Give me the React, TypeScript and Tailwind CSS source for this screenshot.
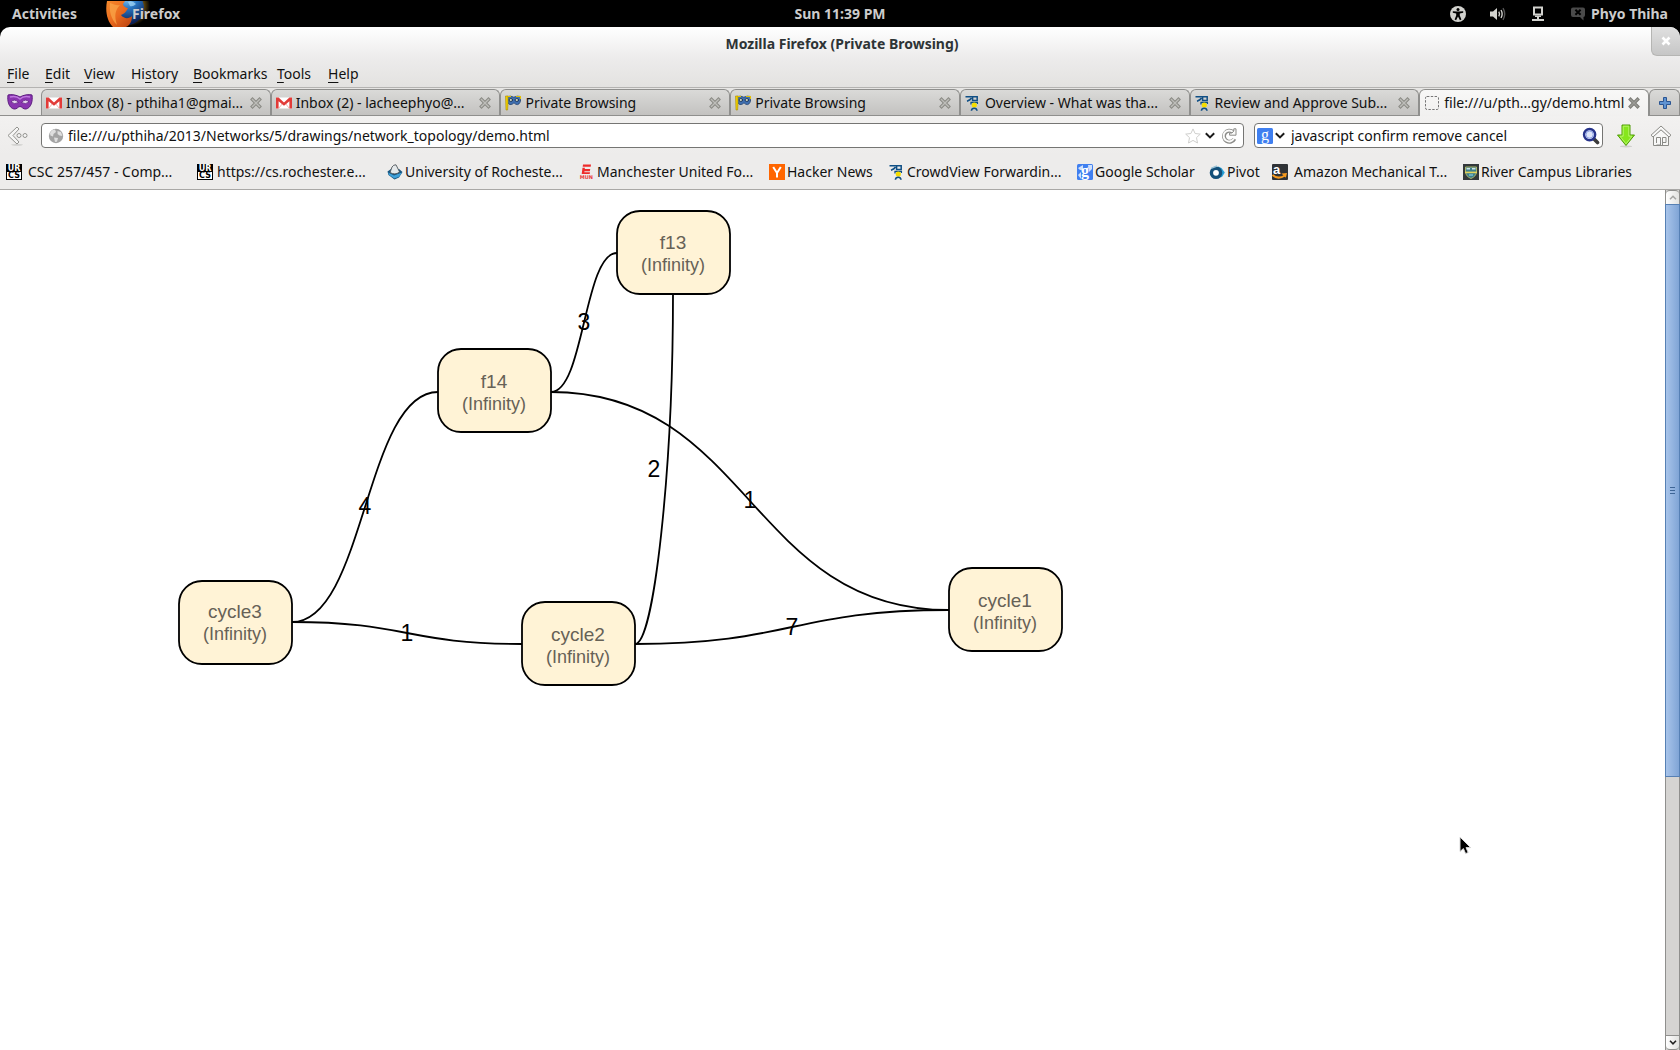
import React from "react";

const uiFont = "font-['Noto_Sans',sans-serif]";

/* ---------- icons ---------- */

function FirefoxIcon() {
  return (
    <svg viewBox="0 0 44 26" className="h-[26px] w-11" aria-hidden="true">
      <defs>
        <radialGradient id="globe" cx="0.5" cy="0.2" r="0.75">
          <stop offset="0" stopColor="#8fd0f5" />
          <stop offset="0.4" stopColor="#2a78c4" />
          <stop offset="1" stopColor="#0a1f55" />
        </radialGradient>
        <linearGradient id="fox" x1="0" y1="0" x2="1" y2="1">
          <stop offset="0" stopColor="#f58a2c" />
          <stop offset="0.5" stopColor="#ea6a1e" />
          <stop offset="1" stopColor="#b8400f" />
        </linearGradient>
        <radialGradient id="glow">
          <stop offset="0.6" stopColor="#7a5a10" />
          <stop offset="1" stopColor="#000" />
        </radialGradient>
      </defs>
      <circle cx="24" cy="5" r="20" fill="url(#glow)" />
      <circle cx="21" cy="7" r="17" fill="url(#globe)" />
      <path d="M1 0 C-1 10 1 20 7 26 L20 26 C24 24 26 20 26 15 C23 18 18 18 15 14 C18 13 20 11 22 7 C20 7 17 5 17 3 L19 0Z" fill="url(#fox)" />
      <path d="M4 2 C3 10 5 18 11 24 C8 15 9 9 14 4 C10 5 8 3 4 2Z" fill="#fba94c" opacity="0.7" />
      <path d="M22 1 Q26 -1 30 3 Q27 6 24 5Z" fill="#a9dcf8" opacity="0.7" />
    </svg>
  );
}

function AccessIcon() {
  return (
    <svg viewBox="0 0 16 16" className="size-4" aria-hidden="true">
      <circle cx="8" cy="8" r="8" fill="#d2d2ce" />
      <circle cx="8" cy="3.4" r="1.5" fill="#000" />
      <path d="M2.8 5.3 L6.8 5.4 H9.2 L13.2 5.3 V6.8 L9.8 7.4 V9.4 L11.4 13.6 L9.9 14.2 L8 10.4 L6.1 14.2 L4.6 13.6 L6.2 9.4 V7.4 L2.8 6.8Z" fill="#000" />
    </svg>
  );
}

function VolumeIcon() {
  return (
    <svg viewBox="0 0 16 14" className="h-3.5 w-4" fill="none" aria-hidden="true">
      <path d="M0 4.5 H3 L7 1 V13 L3 9.5 H0Z" fill="#d2d2ce" />
      <path d="M8.8 4.6 Q10.3 7 8.8 9.4" stroke="#d2d2ce" strokeWidth="1.4" />
      <path d="M11 3 Q13.3 7 11 11" stroke="#d2d2ce" strokeWidth="1.4" />
      <path d="M13 1.2 Q16.4 7 13 12.8" stroke="#555" strokeWidth="1.4" />
    </svg>
  );
}

function NetworkIcon() {
  return (
    <svg viewBox="0 0 12 16" className="h-4 w-3" aria-hidden="true">
      <path d="M1 0.5 H11 V9.5 H1Z M3 2.5 V7.5 H9 V2.5Z" fill="#d2d2ce" fillRule="evenodd" />
      <path d="M3 9.5 H9 V11 H7 V13 H12 V15 H0 V13 H5 V11 H3Z" fill="#d2d2ce" />
    </svg>
  );
}

function ChatIcon() {
  return (
    <svg viewBox="0 0 14 14" className="size-3.5" aria-hidden="true">
      <path d="M2 0.5 H12 Q14 0.5 14 2.5 V8 Q14 10 12.5 10 V13.5 L9 10 H2 Q0 10 0 8 V2.5 Q0 0.5 2 0.5Z" fill="#4a4a4a" />
      <path d="M4.4 2.8 L9.6 7.8 M9.6 2.8 L4.4 7.8" stroke="#000" strokeWidth="2" />
    </svg>
  );
}

function MaskIcon() {
  return (
    <svg viewBox="0 0 26 16" className="h-4 w-[26px]" aria-hidden="true">
      <path d="M1 1 C4 0 10 1 13 3 C16 1 22 0 25 1 C26 7 24 14 19 15 C16 15.5 15 12.5 13 12.5 C11 12.5 10 15.5 7 15 C2 14 0 7 1 1Z" fill="#8a35b0" stroke="#5e1f80" strokeWidth="1" />
      <path d="M3 3 C7 2 11 3 13 5 C15 3 19 2 23 3" fill="none" stroke="#c07ae0" strokeWidth="1.4" />
      <path d="M4 8 Q7.5 4 11.5 8.5 Q7.5 11 4 8Z M22 8 Q18.5 4 14.5 8.5 Q18.5 11 22 8Z" fill="#e6d5ee" stroke="#5e1f80" strokeWidth="0.8" />
    </svg>
  );
}

function GmailIcon() {
  return (
    <svg viewBox="0 0 16 16" className="size-4 shrink-0" aria-hidden="true">
      <path d="M0 2.5 H16 V13.5 H0Z" fill="#fff" />
      <path d="M3 13 L6.5 8.5 M13 13 L9.5 8.5" stroke="#f3b5b3" strokeWidth="1" />
      <path d="M0 2.5 H2.6 L8 7.4 L13.4 2.5 H16 V13.5 H13.4 V6.2 L8 10.8 L2.6 6.2 V13.5 H0Z" fill="#e23b38" />
    </svg>
  );
}

function PrivateIcon() {
  return (
    <svg viewBox="0 0 16 16" className="size-4 shrink-0" aria-hidden="true">
      <path d="M2 1.5 Q6 0.5 8.8 2.2 Q12 0.5 15.8 1.5 Q16 9 12.5 9.6 Q10.6 9.8 9 7.8 Q7.4 9.8 5 9.6 Q2 9 2 1.5Z" fill="#3f6fb0" stroke="#1d3f70" strokeWidth="0.8" />
      <ellipse cx="5.8" cy="5" rx="1.8" ry="1.4" fill="#dfe5c8" stroke="#16305a" />
      <ellipse cx="11.8" cy="5" rx="1.8" ry="1.4" fill="#dfe5c8" stroke="#16305a" />
      <path d="M0.5 1 H3 V9 L2.6 15 H1 Z" fill="#f0d000" stroke="#a88c00" strokeWidth="0.6" />
      <path d="M3 1.5 H6 M11 1.5 H15.5 V4" stroke="#e3c000" strokeWidth="1.2" fill="none" />
    </svg>
  );
}

function CrowdIcon() {
  return (
    <svg viewBox="0 0 16 16" className="size-4 shrink-0" fill="none" aria-hidden="true">
      <path d="M0.5 1.8 H12.2 V5.4 H7.6 V2" stroke="#0f4f85" strokeWidth="1.5" />
      <path d="M6.6 3 Q5.4 5 2 6.2" stroke="#0f4f85" strokeWidth="1.5" />
      <path d="M6 9.6 V7.4 H12.4 V9" stroke="#0f4f85" strokeWidth="1.3" />
      <circle cx="9.3" cy="10" r="2.6" fill="#f5dd00" />
      <path d="M6.4 15.8 Q6.6 13.2 9.2 13.2 Q11.8 13.2 12 15.8" stroke="#0f4f85" strokeWidth="1.6" />
    </svg>
  );
}

function BlankPageIcon() {
  return (
    <svg viewBox="0 0 16 16" className="size-4 shrink-0" aria-hidden="true">
      <rect x="1.5" y="1.5" width="13" height="13" rx="1.5" fill="none" stroke="#777" strokeDasharray="2.4 1.4" />
    </svg>
  );
}

function CloseGlyph({ dark = false }: { dark?: boolean }) {
  return (
    <svg viewBox="0 0 12 12" className="size-3" aria-hidden="true">
      <path d="M2.5 2.5 L9.5 9.5 M9.5 2.5 L2.5 9.5" stroke={dark ? "#7c7c76" : "#8a8a84"} strokeWidth="3.4" strokeLinecap="square" />
      <path d="M2.5 2.5 L9.5 9.5 M9.5 2.5 L2.5 9.5" stroke={dark ? "#9b9b96" : "#bdbdb9"} strokeWidth="1.4" strokeLinecap="square" />
    </svg>
  );
}

function BackIcon() {
  return (
    <svg viewBox="0 0 22 20" className="h-5 w-[22px]" aria-hidden="true">
      <ellipse cx="10" cy="18.8" rx="6" ry="0.9" fill="#d0d0ce" />
      <path d="M10 1 L12 3 L6 9.5 L12 16 L10 18 L1 9.5Z" fill="#f6f6f5" stroke="#93938f" strokeLinejoin="round" />
      <circle cx="12" cy="9.5" r="2" fill="#f6f6f5" stroke="#93938f" />
      <circle cx="18" cy="9.5" r="2" fill="#f6f6f5" stroke="#93938f" />
    </svg>
  );
}

function GlobeIcon() {
  return (
    <svg viewBox="0 0 16 16" className="size-4 shrink-0" aria-hidden="true">
      <circle cx="8" cy="8" r="7.2" fill="#a3a3a3" />
      <path d="M2 5 Q4 1.5 7 1.6 L8 4 L5.5 6 L5 8.6 L2.4 7.4Z M9.5 3 L13 4 L14.4 8 L11.5 7.6 L9.6 6Z M6 9.5 L10 10 L9 13.8 L7 14Z" fill="#dedede" />
    </svg>
  );
}

function StarIcon() {
  return (
    <svg viewBox="0 0 16 16" className="size-4" aria-hidden="true">
      <path d="M8 0.9 L10.1 5.5 L15.3 6.1 L11.5 9.6 L12.5 15 L8 12.4 L3.5 15 L4.5 9.6 L0.7 6.1 L5.9 5.5Z" fill="#fff" stroke="#cfcfcd" strokeLinejoin="round" />
    </svg>
  );
}

function ChevronIcon() {
  return (
    <svg viewBox="0 0 10 8" className="h-2 w-2.5" aria-hidden="true">
      <path d="M0.8 1.2 L5 5.4 L9.2 1.2" fill="none" stroke="#1a1a1a" strokeWidth="2" />
    </svg>
  );
}

function ReloadIcon() {
  return (
    <svg viewBox="0 0 16 16" className="size-4" fill="none" aria-hidden="true">
      <path d="M12 4 A5.5 5.5 0 1 0 13.4 10.8" stroke="#8b8b88" strokeWidth="4" />
      <path d="M12 4 A5.5 5.5 0 1 0 13 10.4" stroke="#fbfbfa" strokeWidth="2" />
      <path d="M15 0.8 V7.2 H8.6 V5 H11 L12.8 3 V0.8Z" fill="#fbfbfa" stroke="#8b8b88" />
    </svg>
  );
}

function GoogleIcon({ scholar = false }: { scholar?: boolean }) {
  return (
    <svg viewBox="0 0 16 16" className="size-4 shrink-0 overflow-visible" aria-hidden="true">
      <rect width="16" height="16" rx="1.5" fill="#3f7ff0" />
      {scholar && <path d="M1 4 L6 1 V6 Q3 7 1 4Z M11 1 L15 1 V5 L12 8Z M1 11 L4 8 V15Z" fill="#cfe0fb" />}
      <text x="8" y="12" textAnchor="middle" fontSize="16" fontFamily="Liberation Serif, serif" fontWeight={scholar ? 700 : 400} fill="#fff">g</text>
    </svg>
  );
}

function SearchIcon() {
  return (
    <svg viewBox="0 0 18 18" className="size-[18px]" aria-hidden="true">
      <path d="M11 11 L15.5 15.5" stroke="#3c3c3c" strokeWidth="3.6" strokeLinecap="round" />
      <circle cx="7.6" cy="7.6" r="5.6" fill="#dfe6fa" stroke="#27348b" strokeWidth="2.4" />
      <circle cx="7.6" cy="7.6" r="3.6" fill="none" stroke="#8fa4e8" strokeWidth="1" />
    </svg>
  );
}

function DownloadIcon() {
  return (
    <svg viewBox="0 0 20 24" className="h-6 w-5" aria-hidden="true">
      <ellipse cx="10" cy="22.4" rx="6" ry="1" fill="#cfcfcd" />
      <path d="M6 1 H14 V11 H18.5 L10 21.5 L1.5 11 H6Z" fill="#86e71c" stroke="#4f9a06" strokeLinejoin="round" />
      <path d="M7.2 2.2 H12.8 V12.2 H16 L10 19.8 L4 12.2 H7.2Z" fill="none" stroke="#b6f56c" />
    </svg>
  );
}

function HomeIcon() {
  return (
    <svg viewBox="0 0 22 22" className="size-[22px]" fill="#f8f8f7" stroke="#8c8c88" strokeLinejoin="round" aria-hidden="true">
      <path d="M3.5 11 L11 4.5 L18.5 11 V20.5 H3.5Z" />
      <path d="M11 1 L21 10.2 L19 12 L11 4.8 L3 12 L1 10.2Z" />
      <path d="M6.5 18 V12.5 H10.5 V20 M10.5 20 H6.5 M12.5 20 V12.5 H16 V17.5 H12.5" fill="none" />
    </svg>
  );
}

function UrcsIcon() {
  return (
    <svg viewBox="0 0 16 16" className="size-4 shrink-0 overflow-visible" aria-hidden="true">
      <rect width="16" height="16" fill="#000" />
      <rect x="1" y="8" width="14" height="7" fill="#fff" />
      <text x="8" y="7" textAnchor="middle" fontSize="8" fontWeight="700" fontFamily="DejaVu Sans, sans-serif" fill="#fff">UR</text>
      <text x="8" y="14.4" textAnchor="middle" fontSize="8" fontWeight="700" fontFamily="DejaVu Sans, sans-serif" fill="#000">CS</text>
    </svg>
  );
}

function RochesterIcon() {
  return (
    <svg viewBox="0 0 16 16" className="size-4 shrink-0" aria-hidden="true">
      <path d="M0.5 7.5 L4 5 H12 L15.5 8 L12 13.5 L7.5 15.4 L1.5 11Z" fill="#16547f" />
      <path d="M1.2 8.5 L7 11.5 L15 8.5 L12 12.8 L7.5 14.6 L2 11Z" fill="#3fa0d8" />
      <path d="M3 8.5 L5 3 Q6.5 0.6 9 0.8 L12.6 8 Q8 11.5 3 8.5Z" fill="#e4e8ea" stroke="#4f565b" strokeWidth="0.9" />
    </svg>
  );
}

function EspnIcon() {
  return (
    <svg viewBox="0 0 16 16" className="size-4 shrink-0 overflow-visible" aria-hidden="true">
      <path d="M4 0.5 H12 L11.7 2.8 H3.7Z M3.5 3.8 H6 L5.7 5 H11.2 L10.9 7.2 H5.5 L5.3 8.2 H11 L10.7 10 H2.7Z" fill="#ee2b2b" />
      <text x="7.4" y="15.4" textAnchor="middle" fontSize="5" fontWeight="700" fontFamily="DejaVu Sans, sans-serif" fill="#e84040">MUN</text>
    </svg>
  );
}

function HackerIcon() {
  return (
    <svg viewBox="0 0 16 16" className="size-4 shrink-0" aria-hidden="true">
      <rect width="16" height="16" fill="#ff6600" />
      <path d="M4.2 3 L8 9 L11.8 3 M8 8.5 V13.4" fill="none" stroke="#fff" strokeWidth="2" />
    </svg>
  );
}

function PivotIcon() {
  return (
    <svg viewBox="0 0 16 16" className="size-4 shrink-0" fill="none" aria-hidden="true">
      <path d="M9 2.5 L12.5 4 L15.8 8.5 L13 13 L8 14Z" fill="#27a0d8" />
      <circle cx="7" cy="8.8" r="4.6" fill="#fff" stroke="#13507a" strokeWidth="3.4" />
      <path d="M2 4.4 L8 2" stroke="#9bc4d8" strokeWidth="1.4" />
    </svg>
  );
}

function AmazonIcon() {
  return (
    <svg viewBox="0 0 16 16" className="size-4 shrink-0 overflow-visible" aria-hidden="true">
      <rect width="16" height="16" rx="1" fill="#2f3236" />
      <text x="4.6" y="9.5" textAnchor="middle" fontSize="13" fontWeight="700" fontFamily="Liberation Sans, sans-serif" fill="#fff">a</text>
      <path d="M0.5 11 Q6 16 13 11.5" fill="none" stroke="#f79a1e" strokeWidth="2" />
      <path d="M9.5 9.6 L15 9 L13.8 13.8Z" fill="#f79a1e" />
    </svg>
  );
}

function LibraryIcon() {
  return (
    <svg viewBox="0 0 16 16" className="size-4 shrink-0" aria-hidden="true">
      <rect width="16" height="16" fill="#33383a" />
      <path d="M2.5 3 H13.5 V8 Q13 12.5 8 14.5 Q3 12.5 2.5 8Z" fill="#3d7f8c" stroke="#a9b56a" />
      <path d="M3.5 4.8 H7 M9 4.8 H12.5" stroke="#cfe3ea" strokeWidth="1.4" />
      <path d="M2 8.4 H14" stroke="#e3d25a" strokeWidth="1.6" />
      <path d="M6 11 H10" stroke="#7fc2d6" strokeWidth="1.4" />
    </svg>
  );
}

/* ---------- data ---------- */

const menus = [
  { before: "", key: "F", after: "ile" },
  { before: "", key: "E", after: "dit" },
  { before: "", key: "V", after: "iew" },
  { before: "Hi", key: "s", after: "tory" },
  { before: "", key: "B", after: "ookmarks" },
  { before: "", key: "T", after: "ools" },
  { before: "", key: "H", after: "elp" },
];

const tabs = [
  { icon: <GmailIcon />, label: "Inbox (8) - pthiha1@gmai..." },
  { icon: <GmailIcon />, label: "Inbox (2) - lacheephyo@..." },
  { icon: <PrivateIcon />, label: "Private Browsing" },
  { icon: <PrivateIcon />, label: "Private Browsing" },
  { icon: <CrowdIcon />, label: "Overview - What was tha..." },
  { icon: <CrowdIcon />, label: "Review and Approve Sub..." },
  { icon: <BlankPageIcon />, label: "file:///u/pth...gy/demo.html", active: true },
];

const bookmarks = [
  { icon: <UrcsIcon />, label: "CSC 257/457 - Comp...", box: "w-[191px] gap-1.5" },
  { icon: <UrcsIcon />, label: "https://cs.rochester.e...", box: "w-[190px] gap-1" },
  { icon: <RochesterIcon />, label: "University of Rocheste...", box: "w-[192px] gap-0.5" },
  { icon: <EspnIcon />, label: "Manchester United Fo...", box: "w-[190px] gap-0.5" },
  { icon: <HackerIcon />, label: "Hacker News", box: "w-[120px] gap-0.5" },
  { icon: <CrowdIcon />, label: "CrowdView Forwardin...", box: "w-[188px] gap-0.5" },
  { icon: <GoogleIcon scholar />, label: "Google Scholar", box: "w-[132px] gap-0.5" },
  { icon: <PivotIcon />, label: "Pivot", box: "w-[63px] gap-0.5" },
  { icon: <AmazonIcon />, label: "Amazon Mechanical T...", box: "w-[191px] gap-1.5" },
  { icon: <LibraryIcon />, label: "River Campus Libraries", box: "gap-0.5" },
];

const nodes = [
  { name: "f13", x: 617, y: 21, base: 38 },
  { name: "f14", x: 438, y: 159, base: 39 },
  { name: "cycle3", x: 179, y: 391, base: 37 },
  { name: "cycle2", x: 522, y: 412, base: 39 },
  { name: "cycle1", x: 949, y: 378, base: 39 },
];

const edges = [
  { d: "M551 202 C584 202 584 63 617 63", label: "3", x: 584, y: 140 },
  { d: "M292 432 C365 432 365 202 438 202", label: "4", x: 365, y: 324 },
  { d: "M292 432 C407 432 407 454 522 454", label: "1", x: 407, y: 451 },
  { d: "M635 454 C792 454 792 420 949 420", label: "7", x: 792, y: 445 },
  { d: "M551 202 C750 202 750 420 949 420", label: "1", x: 750, y: 318 },
  { d: "M673 104 C673 279 654 454 635 454", label: "2", x: 654, y: 287 },
];

/* ---------- sections ---------- */

function TopBar() {
  return (
    <header className="grid h-[27px] shrink-0 grid-cols-[1fr_auto_1fr] items-center text-[14px] font-bold text-[#ccc]">
      <div className="flex items-center">
        <button className="ml-3 w-[94px] text-left">Activities</button>
        <button className="flex h-[27px] items-center">
          <FirefoxIcon />
          <span className="-ml-[18px]">Firefox</span>
        </button>
      </div>
      <button>Sun 11:39 PM</button>
      <div className="flex items-center justify-end pr-3">
        <button aria-label="Accessibility" className="mr-6"><AccessIcon /></button>
        <button aria-label="Volume" className="mr-[26px]"><VolumeIcon /></button>
        <button aria-label="Network" className="mr-[27px]"><NetworkIcon /></button>
        <button className="flex items-center gap-1.5"><ChatIcon />Phyo Thiha</button>
      </div>
    </header>
  );
}

function TitleAndMenu() {
  return (
    <div className="h-[61px] overflow-hidden rounded-t-[10px] border-b border-[#b4b3b1] bg-linear-to-b from-white via-[#edecec] to-[#e3e2e0]">
      <div className="grid h-[34px] grid-cols-[1fr_auto_1fr] items-center">
        <h1 className="col-start-2 pl-1 text-[14px] font-bold text-[#2e3436]">Mozilla Firefox (Private Browsing)</h1>
        <button aria-label="Close window" className="flex h-[29px] w-[29px] items-center justify-center self-start justify-self-end rounded-bl-md border-b border-l border-[#b5b5b3] bg-linear-to-b from-[#e0e0e0] to-[#c6c6c6]">
          <svg viewBox="0 0 10 10" className="size-2.5" aria-hidden="true">
            <path d="M1.5 1.5 L8.5 8.5 M8.5 1.5 L1.5 8.5" stroke="#fff" strokeWidth="2.6" />
          </svg>
        </button>
      </div>
      <nav className="grid h-[26px] grid-cols-[38px_39px_47px_62px_84px_51px_auto] items-center justify-start pl-[7px] text-[14px] text-[#111]">
        {menus.map((m) => (
          <button key={m.key + m.after} className="text-left">
            {m.before}
            <span className="underline underline-offset-3">{m.key}</span>
            {m.after}
          </button>
        ))}
      </nav>
    </div>
  );
}

function TabStrip() {
  return (
    <div className="flex h-7 border-b border-[#8f8f8d] bg-[#e6e5e3] pt-px">
      <div className="flex w-[41px] shrink-0 items-center pl-[7px]"><MaskIcon /></div>
      {tabs.map((t, i) => (
        <div
          key={i}
          className={
            t.active
              ? "-mb-px flex min-w-0 flex-1 items-center rounded-t-md border border-b-0 border-[#8f8f8d] bg-linear-to-b from-[#f8f8f7] to-[#f1f0ef] pr-2 pl-1"
              : "flex min-w-0 flex-1 items-center rounded-t-md border border-b-0 border-[#8f8f8d] bg-linear-to-b from-[#dadad8] to-[#c3c2c0] pr-2 pl-1"
          }
        >
          <button className="flex min-w-0 flex-1 items-center gap-1 whitespace-nowrap">
            {t.icon}
            <span>{t.label}</span>
          </button>
          <button aria-label={"Close tab " + t.label} className="shrink-0"><CloseGlyph dark={t.active} /></button>
        </div>
      ))}
      <button aria-label="New tab" className="flex w-[31px] shrink-0 items-center justify-center rounded-t-md border border-b-0 border-[#8f8f8d] bg-linear-to-b from-[#dadad8] to-[#c3c2c0]">
        <svg viewBox="0 0 12 12" className="size-3" aria-hidden="true">
          <path d="M4.5 0.5 H7.5 V4.5 H11.5 V7.5 H7.5 V11.5 H4.5 V7.5 H0.5 V4.5 H4.5Z" fill="#5f93d2" stroke="#2a5593" />
        </svg>
      </button>
    </div>
  );
}

function NavBar() {
  return (
    <div className="flex h-[39px] items-center bg-linear-to-b from-[#f2f1f0] to-[#edeceb] pr-2 pl-[7px]">
      <button aria-label="Back" className="w-[34px] shrink-0"><BackIcon /></button>
      <div className="flex h-[25px] min-w-0 flex-1 items-center rounded border border-[#757573] bg-white px-1.5">
        <GlobeIcon />
        <input aria-label="Address" defaultValue="file:///u/pthiha/2013/Networks/5/drawings/network_topology/demo.html" className="min-w-0 flex-1 bg-transparent pl-1 outline-none" />
        <button aria-label="Bookmark this page" className="mr-1"><StarIcon /></button>
        <button aria-label="Show history" className="mr-1.5"><ChevronIcon /></button>
        <button aria-label="Reload"><ReloadIcon /></button>
      </div>
      <div className="mr-[13px] ml-2.5 flex h-[25px] w-[349px] shrink-0 items-center rounded border border-[#757573] bg-white px-0.5">
        <button aria-label="Choose search engine" className="flex items-center gap-0.5"><GoogleIcon /><ChevronIcon /></button>
        <input aria-label="Search" defaultValue="javascript confirm remove cancel" className="min-w-0 flex-1 bg-transparent pl-1.5 outline-none" />
        <button aria-label="Search the web"><SearchIcon /></button>
      </div>
      <button aria-label="Downloads" className="mr-3.5"><DownloadIcon /></button>
      <button aria-label="Home"><HomeIcon /></button>
    </div>
  );
}

function BookmarksBar() {
  return (
    <nav className="flex h-[35px] items-center border-b border-[#a9a8a6] bg-[#edeceb] pl-1.5">
      {bookmarks.map((b, i) => (
        <a key={i} href="#" className={"flex shrink-0 items-center whitespace-nowrap " + b.box}>
          {b.icon}
          <span>{b.label}</span>
        </a>
      ))}
    </nav>
  );
}

function Graph() {
  return (
    <svg width="1080" height="520" viewBox="0 0 1080 520" className="block font-['Liberation_Sans',sans-serif]" role="img" aria-label="Network topology">
      {nodes.map((n) => (
        <g key={n.name}>
          <rect x={n.x} y={n.y} width="113" height="83" rx="23" fill="#fff3d6" stroke="#000" strokeWidth="1.8" />
          <g fill="#666156" fontSize="19" textAnchor="middle">
            <text x={n.x + 56} y={n.y + n.base}>{n.name}</text>
            <text x={n.x + 56} y={n.y + n.base + 22} fontSize="18">(Infinity)</text>
          </g>
        </g>
      ))}
      {edges.map((e) => (
        <g key={e.d}>
          <path d={e.d} fill="none" stroke="#000" strokeWidth="1.8" />
          <text x={e.x} y={e.y} fontSize="23" textAnchor="middle" fill="#000">{e.label}</text>
        </g>
      ))}
    </svg>
  );
}

function ScrollBar() {
  return (
    <div className="flex w-[15px] shrink-0 flex-col border-x border-[#8f8f8d] bg-[#d5d4d2]">
      <button aria-label="Scroll up" className="flex h-3.5 items-center justify-center rounded-t border-t border-[#8f8f8d] bg-linear-to-r from-white to-[#e2e2e0]">
        <svg viewBox="0 0 8 5" className="h-[5px] w-2" aria-hidden="true"><path d="M1 4.2 L4 1.2 L7 4.2" fill="none" stroke="#a5a5a3" strokeWidth="1.5" /></svg>
      </button>
      <div className="-mx-px flex basis-[573px] items-center justify-center border border-[#5680b4] bg-linear-to-r from-[#a8c4ea] to-[#80a5d6]">
        <div className="flex flex-col gap-0.5">
          <div className="h-px w-[5px] bg-[#3e6596]" />
          <div className="h-px w-[5px] bg-[#3e6596]" />
          <div className="h-px w-[5px] bg-[#3e6596]" />
        </div>
      </div>
      <div className="flex-1" />
      <button aria-label="Scroll down" className="flex h-[15px] items-center justify-center rounded-b border-y border-[#8f8f8d] bg-linear-to-r from-white to-[#e2e2e0]">
        <svg viewBox="0 0 8 5" className="h-[5px] w-2" aria-hidden="true"><path d="M1 0.8 L4 3.8 L7 0.8" fill="none" stroke="#222" strokeWidth="1.6" /></svg>
      </button>
    </div>
  );
}

export default function App() {
  return (
    <div className={"flex min-h-screen flex-col bg-black text-[14px] leading-5 text-[#111] " + uiFont}>
      <TopBar />
      <TitleAndMenu />
      <TabStrip />
      <NavBar />
      <BookmarksBar />
      <main className="relative flex flex-1 bg-white">
        <div className="min-w-0 flex-1 overflow-hidden"><Graph /></div>
        <ScrollBar />
        <svg viewBox="0 0 14 20" className="absolute top-[646px] left-[1459px] h-5 w-3.5" aria-hidden="true">
          <path d="M1 1 V15.5 L4.4 12.6 L6.6 17.6 L9.2 16.5 L7 11.6 H11.6Z" fill="#000" stroke="#d8d8d8" strokeLinejoin="round" />
        </svg>
      </main>
    </div>
  );
}
